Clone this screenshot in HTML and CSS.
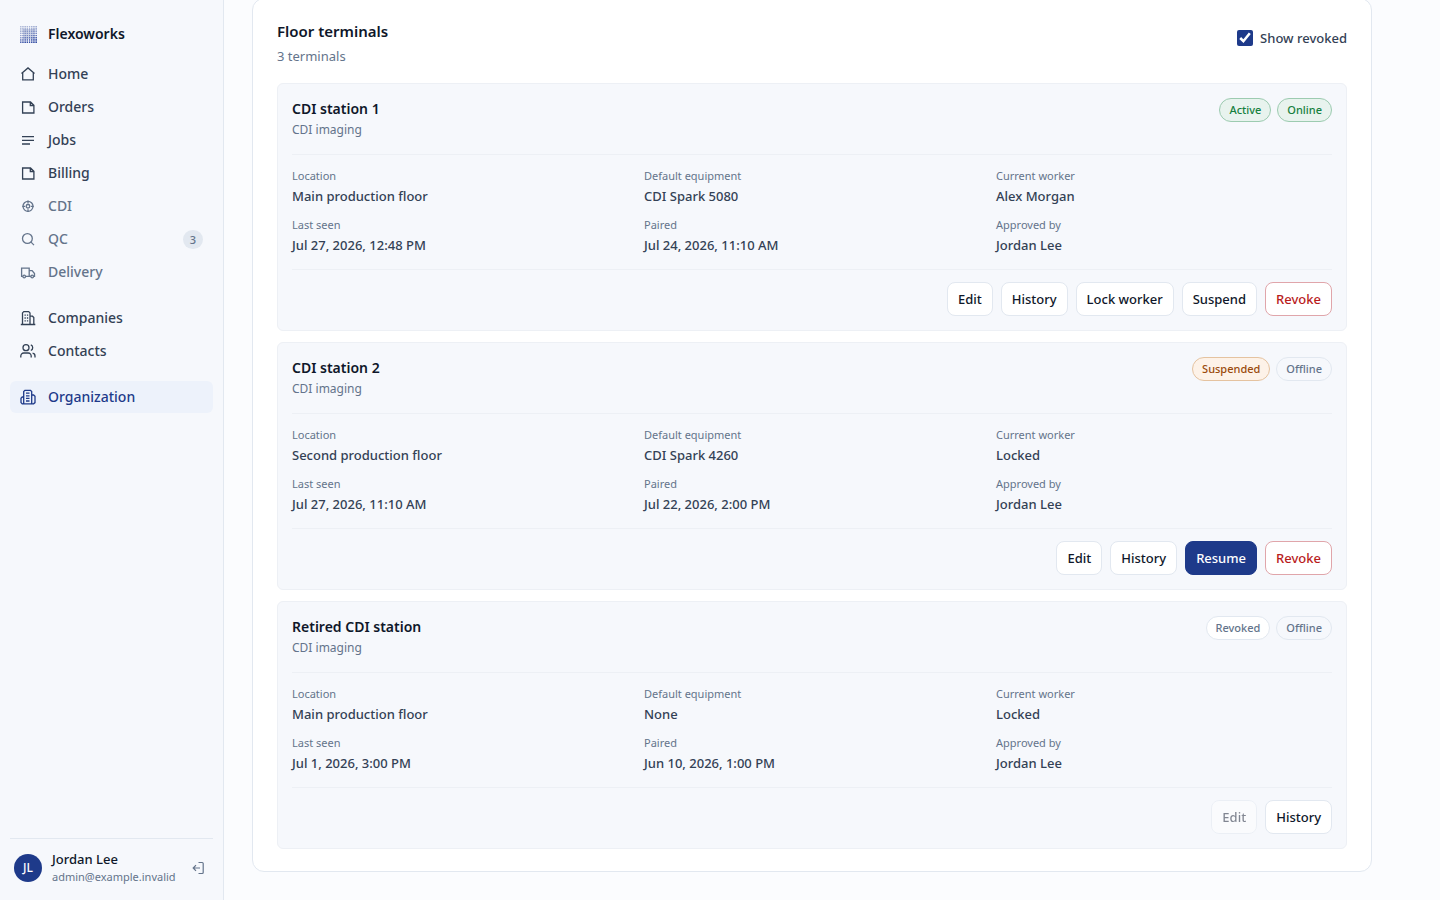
FILE: index.html
```html
<!DOCTYPE html>
<html lang="en">
  <head>
    <meta charset="utf-8">
    <title>Floor terminals - Flexoworks</title>
    <meta name="viewport" content="width=device-width, initial-scale=1">
    <link rel="stylesheet" href="styles.css">
  </head>
  <body>
    <aside class="sidebar">
      <a class="brand" href="#">
        <svg class="brand-logo" viewBox="0 0 17 17">
          <defs>
            <pattern id="dots" width="2.2" height="2.2" patternUnits="userSpaceOnUse">
              <rect width="1.5" height="1.5" rx="0.5" fill="#fff"/>
            </pattern>
            <mask id="dot-mask"><rect width="17" height="17" fill="url(#dots)"/></mask>
            <linearGradient id="fade" x1="0" y1="0" x2="0.35" y2="1">
              <stop offset="0" stop-color="#1e3a8a" stop-opacity="0.35"/>
              <stop offset="0.6" stop-color="#1e3a9a" stop-opacity="0.55"/>
              <stop offset="1" stop-color="#1e3a9a"/>
            </linearGradient>
          </defs>
          <rect x="3" y="3" width="12" height="10" fill="#1e3a8a" opacity="0.16"/>
          <rect width="17" height="17" fill="url(#fade)" mask="url(#dot-mask)"/>
        </svg>
        <span>Flexoworks</span>
      </a>

      <nav class="nav">
        <a class="nav-link" href="#">
          <svg class="icon" viewBox="0 0 16 16"><path d="M1.500 7.600 8 1.900l6.500 5.700M2.700 6.600v7.300h10.600V6.600"/></svg>
          <span>Home</span>
        </a>
        <a class="nav-link" href="#">
          <svg class="icon" viewBox="0 0 16 16"><path d="M2.600 3h7.900l3.400 3.200V14H2.600zM10.300 3v3.500h3.600"/></svg>
          <span>Orders</span>
        </a>
        <a class="nav-link" href="#">
          <svg class="icon" viewBox="0 0 16 16"><path d="M2 4.700h12M2 8.300h12M2 12h8"/></svg>
          <span>Jobs</span>
        </a>
        <a class="nav-link" href="#">
          <svg class="icon" viewBox="0 0 16 16"><path d="M2.600 3h7.900l3.400 3.200V14H2.600zM10.300 3v3.500h3.600"/></svg>
          <span>Billing</span>
        </a>
        <a class="nav-link nav-link-sub" href="#">
          <svg class="icon" viewBox="0 0 16 16"><circle cx="8" cy="8.300" r="5"/><circle cx="8" cy="8.300" r="1.800"/><path d="M8 2.600v2.800M8 11.200V14M2.300 8.300h2.800M10.900 8.300h2.800"/></svg>
          <span>CDI</span>
        </a>
        <a class="nav-link nav-link-sub" href="#">
          <svg class="icon" viewBox="0 0 16 16"><circle cx="7.400" cy="7.500" r="4.900"/><path d="m11 11.100 3 3"/></svg>
          <span>QC</span>
          <span class="nav-count">3</span>
        </a>
        <a class="nav-link nav-link-sub" href="#">
          <svg class="icon" viewBox="0 0 16 16"><path d="M2.800 12.400H1.600V4.200h7.600v8.200H5.500M9.200 6.700h2.900l2.400 2.800v2.900h-1M10.900 12.400H9.200"/><circle cx="4.200" cy="12.500" r="1.300"/><circle cx="12.200" cy="12.500" r="1.300"/></svg>
          <span>Delivery</span>
        </a>
        <a class="nav-link nav-link-first" href="#">
          <svg class="icon" viewBox="0 0 16 16"><path d="M.8 14.500h14.500M2.500 14.500V2.900l1.300-1.300h4.900L10 2.900v11.600M10 6.200h2.500l1.300 1.300v7M4.500 5.200h1.300M6.900 5.200h1.300M4.500 8h1.300M6.900 8h1.300M4.500 10.800h1.300M6.900 10.800h1.300"/></svg>
          <span>Companies</span>
        </a>
        <a class="nav-link" href="#">
          <svg class="icon" viewBox="0 0 16 16"><circle cx="6" cy="4.700" r="3"/><path d="M.8 14.500v-1.600A2.900 2.900 0 0 1 3.700 10h4.600a2.900 2.900 0 0 1 2.900 2.900v1.600M10.800 1.900a3 3 0 0 1 0 5.600M12.600 10.100a2.900 2.900 0 0 1 2.400 2.800v1.600"/></svg>
          <span>Contacts</span>
        </a>
        <a class="nav-link nav-link-first active" href="#" aria-current="page">
          <svg class="icon" viewBox="0 0 16 16"><path d="M3.700 14.800V2.500l1.200-1.200h5.600l1.200 1.200v12.300zM3.700 8H2.200L1 9.200v4.400l1.200 1.200h1.500M11.700 6h1.900L15 7.300v6.300l-1.400 1.200h-1.900M6 4.200h3.500M6 6.800h3.500M6 9.400h3.500M6 12h3.500"/></svg>
          <span>Organization</span>
        </a>
      </nav>

      <div class="account">
        <div class="avatar">JL</div>
        <div class="account-text">
          <div class="account-name">Jordan Lee</div>
          <div class="account-mail">admin@example.invalid</div>
        </div>
        <button class="logout" type="button" aria-label="Log out">
          <svg viewBox="0 0 14 14"><path d="M7.500 1.500h3.700q1 0 1 1v9q0 1-1 1H7.500M9 7H2.300M5 4.200 2.200 7 5 9.800"/></svg>
        </button>
      </div>
    </aside>

    <main class="main">
      <section class="panel">
        <header class="panel-head">
          <div>
            <h2>Floor terminals</h2>
            <p>3 terminals</p>
          </div>
          <label class="toggle">
            <input type="checkbox" checked>
            <span>Show revoked</span>
          </label>
        </header>

        <div class="terminals">
          <article class="terminal">
            <header class="terminal-head">
              <div>
                <h3>CDI station 1</h3>
                <p>CDI imaging</p>
              </div>
              <div class="badges">
                <span class="badge badge-green">Active</span>
                <span class="badge badge-green">Online</span>
              </div>
            </header>
            <dl class="details">
              <div><dt>Location</dt><dd>Main production floor</dd></div>
              <div><dt>Default equipment</dt><dd>CDI Spark 5080</dd></div>
              <div><dt>Current worker</dt><dd>Alex Morgan</dd></div>
              <div><dt>Last seen</dt><dd>Jul 27, 2026, 12:48 PM</dd></div>
              <div><dt>Paired</dt><dd>Jul 24, 2026, 11:10 AM</dd></div>
              <div><dt>Approved by</dt><dd>Jordan Lee</dd></div>
            </dl>
            <div class="actions">
              <button class="btn" type="button">Edit</button>
              <button class="btn" type="button">History</button>
              <button class="btn" type="button">Lock worker</button>
              <button class="btn" type="button">Suspend</button>
              <button class="btn btn-danger" type="button">Revoke</button>
            </div>
          </article>

          <article class="terminal">
            <header class="terminal-head">
              <div>
                <h3>CDI station 2</h3>
                <p>CDI imaging</p>
              </div>
              <div class="badges">
                <span class="badge badge-orange">Suspended</span>
                <span class="badge">Offline</span>
              </div>
            </header>
            <dl class="details">
              <div><dt>Location</dt><dd>Second production floor</dd></div>
              <div><dt>Default equipment</dt><dd>CDI Spark 4260</dd></div>
              <div><dt>Current worker</dt><dd>Locked</dd></div>
              <div><dt>Last seen</dt><dd>Jul 27, 2026, 11:10 AM</dd></div>
              <div><dt>Paired</dt><dd>Jul 22, 2026, 2:00 PM</dd></div>
              <div><dt>Approved by</dt><dd>Jordan Lee</dd></div>
            </dl>
            <div class="actions">
              <button class="btn" type="button">Edit</button>
              <button class="btn" type="button">History</button>
              <button class="btn btn-primary" type="button">Resume</button>
              <button class="btn btn-danger" type="button">Revoke</button>
            </div>
          </article>

          <article class="terminal">
            <header class="terminal-head">
              <div>
                <h3>Retired CDI station</h3>
                <p>CDI imaging</p>
              </div>
              <div class="badges">
                <span class="badge badge-white">Revoked</span>
                <span class="badge">Offline</span>
              </div>
            </header>
            <dl class="details">
              <div><dt>Location</dt><dd>Main production floor</dd></div>
              <div><dt>Default equipment</dt><dd>None</dd></div>
              <div><dt>Current worker</dt><dd>Locked</dd></div>
              <div><dt>Last seen</dt><dd>Jul 1, 2026, 3:00 PM</dd></div>
              <div><dt>Paired</dt><dd>Jun 10, 2026, 1:00 PM</dd></div>
              <div><dt>Approved by</dt><dd>Jordan Lee</dd></div>
            </dl>
            <div class="actions">
              <button class="btn" type="button" disabled>Edit</button>
              <button class="btn" type="button">History</button>
            </div>
          </article>
        </div>
      </section>
    </main>
  </body>
</html>
```
FILE: styles.css
```css
* {
  padding: 0;
  margin: 0;
  box-sizing: border-box;
}
body {
  display: flex;
  min-height: 100vh;
  background-color: #fbfcfe;
  color: #0f172a;
  font-family: "Noto Sans", sans-serif;
  font-size: 13px;
}
a {
  color: inherit;
  text-decoration: none;
}
button {
  font-family: inherit;
  cursor: pointer;
}

/* sidebar */
.sidebar {
  position: sticky;
  top: 0;
  flex: none;
  width: 224px;
  height: 100vh;
  padding: 20px 10px 15px;
  display: flex;
  flex-direction: column;
  background-color: #f6f8fc;
  border-right: 1px solid #e2e8f0;
}
.brand {
  display: flex;
  align-items: center;
  gap: 11px;
  height: 28px;
  padding: 0 10px;
  margin-bottom: 10px;
  font-size: 14px;
  font-weight: 600;
  line-height: 20px;
}
.brand-logo {
  width: 17px;
  height: 17px;
}
.nav {
  display: flex;
  flex-direction: column;
  gap: 1px;
}
.nav-link {
  display: flex;
  align-items: center;
  gap: 12px;
  height: 32px;
  padding: 0 10px;
  border-radius: 6px;
  color: #334155;
  font-size: 14px;
  font-weight: 500;
  line-height: 20px;
}
.nav-link:hover {
  background-color: #eef2f8;
}
.nav-link-sub {
  color: #64748b;
}
.nav-link-first {
  margin-top: 13px;
}
.nav-link.active {
  background-color: #edf2fb;
  color: #1e3a8a;
}
.icon {
  width: 16px;
  height: 16px;
  fill: none;
  stroke: currentColor;
  stroke-width: 1.3;
}
.nav-count {
  min-width: 20px;
  height: 19px;
  margin-left: auto;
  border-radius: 10px;
  background-color: #e2e8f0;
  font-size: 11px;
  line-height: 19px;
  text-align: center;
}
.account {
  display: flex;
  align-items: center;
  gap: 10px;
  margin-top: auto;
  padding: 11px 4px 0;
  border-top: 1px solid #e2e8f0;
}
.avatar {
  flex: none;
  width: 28px;
  height: 28px;
  border-radius: 50%;
  background-color: #1e3a8a;
  color: #fff;
  font-size: 12px;
  font-weight: 500;
  line-height: 28px;
  text-align: center;
}
.account-text {
  flex: 1;
}
.account-name {
  font-weight: 500;
  line-height: 18px;
}
.account-mail {
  color: #64748b;
  font-size: 11px;
  line-height: 17px;
}
.logout {
  display: flex;
  padding: 4px;
  border: none;
  background: none;
  color: #64748b;
}
.logout svg {
  width: 14px;
  height: 14px;
  fill: none;
  stroke: currentColor;
  stroke-width: 1.2;
}

/* terminals */
.main {
  flex: 1;
  padding: 0 68px 28px 28px;
}
.panel {
  margin-top: -2px;
  padding: 21px 24px 22px;
  background-color: #fff;
  border: 1px solid #e2e8f0;
  border-radius: 12px;
}
.panel-head {
  display: flex;
  justify-content: space-between;
  align-items: flex-start;
  margin-bottom: 17px;
}
.panel-head h2 {
  font-size: 15px;
  font-weight: 600;
  line-height: 22px;
}
.panel-head p {
  margin-top: 4px;
  color: #64748b;
  line-height: 20px;
}
.toggle {
  display: flex;
  align-items: center;
  gap: 7px;
  margin-top: 8px;
  color: #334155;
  font-weight: 500;
  line-height: 20px;
}
.toggle input {
  width: 16px;
  height: 16px;
  accent-color: #1e3a8a;
}
.terminals {
  display: flex;
  flex-direction: column;
  gap: 11px;
}
.terminal {
  padding: 14px;
  background-color: #f6f8fc;
  border: 1px solid #edf0f5;
  border-radius: 6px;
}
.terminal-head {
  display: flex;
  justify-content: space-between;
  align-items: flex-start;
  padding-bottom: 14px;
}
.terminal-head h3 {
  font-size: 14px;
  font-weight: 600;
  line-height: 22px;
}
.terminal-head p {
  color: #64748b;
  font-size: 12px;
  line-height: 20px;
}
.badges {
  display: flex;
  gap: 6px;
}
.badge {
  padding: 0 9px;
  border: 1px solid #e2e8f0;
  border-radius: 12px;
  color: #64748b;
  font-size: 11px;
  font-weight: 500;
  line-height: 22px;
}
.badge-green {
  background-color: #e8f3ee;
  border-color: #9ccbb0;
  color: #15803d;
}
.badge-orange {
  background-color: #fdf2e8;
  border-color: #e5c3a0;
  color: #9a4a0c;
}
.badge-white {
  background-color: #fff;
}
.details {
  display: grid;
  grid-template-columns: repeat(3, 1fr);
  gap: 9px 16px;
  padding: 12px 0 13px;
  border-top: 1px solid #edf0f5;
  border-bottom: 1px solid #edf0f5;
}
.details dt {
  color: #64748b;
  font-size: 11px;
  line-height: 18px;
}
.details dd {
  color: #334155;
  font-weight: 500;
  line-height: 22px;
}
.actions {
  display: flex;
  justify-content: flex-end;
  gap: 8px;
  padding-top: 12px;
}
.btn {
  height: 34px;
  padding: 0 10px;
  border: 1px solid #e2e8f0;
  border-radius: 8px;
  background-color: #fff;
  color: #0f172a;
  font-size: 13px;
  font-weight: 500;
}
.btn:disabled {
  opacity: 0.5;
  cursor: default;
}
.btn-primary {
  background-color: #1e3a8a;
  border-color: #1e3a8a;
  color: #fff;
}
.btn-danger {
  border-color: #e0a5aa;
  color: #b91c1c;
}
```
